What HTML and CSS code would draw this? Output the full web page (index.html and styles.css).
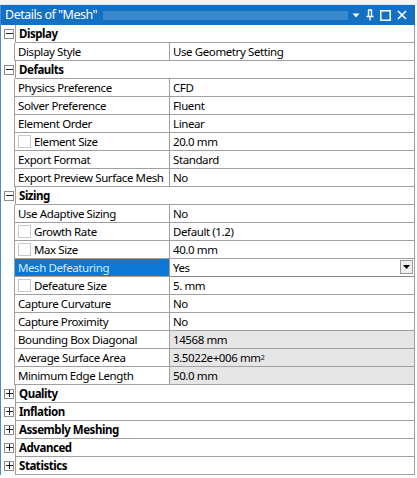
FILE: index.html
```html
<!DOCTYPE html>
<html>
<head>
<meta charset="utf-8">
<link rel="stylesheet" href="styles.css">
</head>
<body>
<div class="topstrip"></div>
<div class="panel">
  <div class="titlebar">
    <span class="title">Details of "Mesh"</span>
    <span class="dots"></span>
    <span class="ticons">
      <svg class="ico" width="8" height="8" viewBox="0 0 8 8"><path d="M0.5 2.5 L7.5 2.5 L4 6.5 Z" fill="#fff"/></svg>
      <svg class="ico" width="8" height="12" viewBox="0 0 8 12"><path d="M2 1 H6 M2.5 1 V7 M5.5 1 V7 M0.5 7.5 H7.5 M4 7.5 V11.5" stroke="#fff" stroke-width="1.4" fill="none"/></svg>
      <svg class="ico" width="11" height="11" viewBox="0 0 11 11"><rect x="0.8" y="0.8" width="9.4" height="9.4" stroke="#fff" stroke-width="1.5" fill="none"/></svg>
      <svg class="ico" width="10" height="10" viewBox="0 0 10 10"><path d="M1 1 L9 9 M9 1 L1 9" stroke="#fff" stroke-width="1.6"/></svg>
    </span>
  </div>
  <div class="grid">
    <div class="row group"><span class="tog minus"></span><span class="gname">Display</span></div>
    <div class="row"><span class="gut"></span><span class="name">Display Style</span><span class="val">Use Geometry Setting</span></div>
    <div class="row group"><span class="tog minus"></span><span class="gname">Defaults</span></div>
    <div class="row"><span class="gut"></span><span class="name">Physics Preference</span><span class="val">CFD</span></div>
    <div class="row"><span class="gut"></span><span class="name">Solver Preference</span><span class="val">Fluent</span></div>
    <div class="row"><span class="gut"></span><span class="name">Element Order</span><span class="val">Linear</span></div>
    <div class="row"><span class="gut"></span><span class="name"><span class="cb"></span>Element Size</span><span class="val">20.0 mm</span></div>
    <div class="row"><span class="gut"></span><span class="name">Export Format</span><span class="val">Standard</span></div>
    <div class="row"><span class="gut"></span><span class="name">Export Preview Surface Mesh</span><span class="val">No</span></div>
    <div class="row group"><span class="tog minus"></span><span class="gname">Sizing</span></div>
    <div class="row"><span class="gut"></span><span class="name">Use Adaptive Sizing</span><span class="val">No</span></div>
    <div class="row"><span class="gut"></span><span class="name"><span class="cb"></span>Growth Rate</span><span class="val">Default (1.2)</span></div>
    <div class="row"><span class="gut"></span><span class="name"><span class="cb"></span>Max Size</span><span class="val">40.0 mm</span></div>
    <div class="row sel"><span class="gut"></span><span class="name">Mesh Defeaturing</span><span class="val combo">Yes<span class="drop"><svg width="7" height="4" viewBox="0 0 7 4"><path d="M0 0 H7 L3.5 4 Z" fill="#000"/></svg></span></span></div>
    <div class="row"><span class="gut"></span><span class="name"><span class="cb"></span>Defeature Size</span><span class="val">5. mm</span></div>
    <div class="row"><span class="gut"></span><span class="name">Capture Curvature</span><span class="val">No</span></div>
    <div class="row"><span class="gut"></span><span class="name">Capture Proximity</span><span class="val">No</span></div>
    <div class="row"><span class="gut"></span><span class="name">Bounding Box Diagonal</span><span class="val ro">14568 mm</span></div>
    <div class="row"><span class="gut"></span><span class="name">Average Surface Area</span><span class="val ro">3.5022e+006 mm<sup>2</sup></span></div>
    <div class="row"><span class="gut"></span><span class="name">Minimum Edge Length</span><span class="val ro">50.0 mm</span></div>
    <div class="row group"><span class="tog plus"></span><span class="gname">Quality</span></div>
    <div class="row group"><span class="tog plus"></span><span class="gname">Inflation</span></div>
    <div class="row group"><span class="tog plus"></span><span class="gname">Assembly Meshing</span></div>
    <div class="row group"><span class="tog plus"></span><span class="gname">Advanced</span></div>
    <div class="row group"><span class="tog plus"></span><span class="gname">Statistics</span></div>
  </div>
</div>
</body>
</html>
```

FILE: styles.css
```css
* { box-sizing: border-box; }
html, body { margin: 0; padding: 0; background: #fff; }
body {
  width: 417px;
  height: 478px;
  overflow: hidden;
  font-family: "Noto Sans", "Open Sans", sans-serif;
  font-size: 11.5px;
  color: #000;
}
.topstrip {
  height: 5px;
  background: #f4f6f8;
  border-bottom: 1px solid #e2e6ea;
}
.panel {
  width: 415px;
  border-left: 1px solid #4a8fc4;
}
.titlebar {
  height: 20px;
  background: #1470c2;
  display: flex;
  align-items: center;
  padding: 0 8px 0 4px;
  color: #fff;
}
.title {
  font-size: 12.5px;
  line-height: 20px;
  white-space: nowrap;
  letter-spacing: -0.5px;
}
.dots {
  flex: 1;
  height: 9px;
  margin: 0 4px 0 6px;
  background-image: radial-gradient(circle, #4f97d6 0.6px, transparent 0.9px);
  background-size: 2px 2px;
}
.ticons {
  display: flex;
  align-items: center;
  gap: 6px;
}
.ico { display: block; }
.grid {
  border-right: 1px solid #a0a0a0;
  width: 414px;
}
.row {
  display: grid;
  grid-template-columns: 14px 155px 1fr;
  height: 18px;
  line-height: 17px;
  white-space: nowrap;
}
.row > span { display: block; }
.gut {
  border-right: 1px solid #a0a0a0;
}
.name, .val, .gname {
  border-bottom: 1px solid #a0a0a0;
  padding-left: 3px;
  overflow: hidden;
  display: flex !important;
  align-items: center;
}
.name { border-right: 1px solid #a0a0a0; letter-spacing: -0.4px; }
.val { letter-spacing: -0.4px; }
.group { grid-template-columns: 14px 1fr; }
.gname {
  font-weight: bold;
  border-left: 1px solid #a0a0a0;
  letter-spacing: -0.45px;
}
.tog {
  position: relative;
  margin: 4px 0 0 3px;
  width: 10px;
  height: 10px;
  border: 1px solid #8c8c8c;
  background: #fff;
}
.tog::before {
  content: "";
  position: absolute;
  left: 1px; top: 3px;
  width: 7px;
  height: 1px;
  background: #222;
}
.plus::after {
  content: "";
  position: absolute;
  left: 4px; top: 0px;
  width: 1px; height: 7px;
  background: #222;
}
.cb {
  display: inline-block;
  width: 13px;
  height: 13px;
  border: 1px solid #c8c8c8;
  background: #fff;
  margin: 0 3px 0 0;
  flex: none;
}
.sel .name {
  background: #0a78d4;
  color: #d8e8f8;
}
.combo {
  position: relative;
  border-bottom: 1px solid #888;
}
.drop {
  position: absolute;
  right: 1px;
  top: 1px;
  width: 13px;
  height: 14px;
  border: 1px solid #9a9a9a;
  background: #f0f0f0;
  display: flex;
  align-items: center;
  justify-content: center;
}
.drop svg { display: block; }
.ro { background: #e6e6e6; }
sup { font-size: 7px; line-height: 0; vertical-align: 6px; }
```
